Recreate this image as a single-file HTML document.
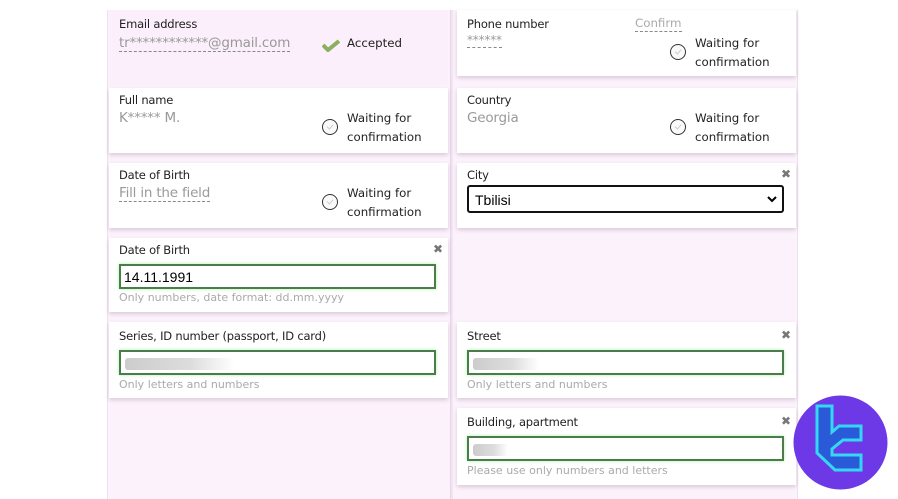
<!DOCTYPE html>
<html><head><meta charset="utf-8"><style>
*{margin:0;padding:0;box-sizing:border-box}
body{width:898px;height:499px;background:#fff;position:relative;overflow:hidden;font-family:"DejaVu Sans","Liberation Sans",sans-serif;color:#222}
.bg{position:absolute;left:107px;top:10px;width:691px;height:489px;background:#fcf2fc;border-left:1px solid #efe0ef;border-right:1px solid #efe0ef}
.div{position:absolute;left:450px;top:10px;width:3px;height:489px;background:#f2e4f2;border-left:1px solid #e6d6e6}
.card{position:absolute;background:#fff;box-shadow:0 2px 4px rgba(120,80,120,.25)}
.lbl{position:absolute;left:10px;font-size:11.5px;color:#222;letter-spacing:-.2px}
.val{position:absolute;left:10px;font-size:13.5px;color:#9a9a9a;letter-spacing:-.2px}
.dash{border-bottom:1px dashed #888}
.st{position:absolute;font-size:11.8px;line-height:19px;color:#222}
.circ{position:absolute;width:16px;height:16px;border:1.5px solid #333;border-radius:50%;background:#fafafa}
.circ:after{content:"";position:absolute;left:5px;top:3px;width:3px;height:5px;border-right:1px solid #ccc;border-bottom:1px solid #ccc;transform:rotate(40deg)}
.inp{position:absolute;left:10px;width:317px;height:25px;border:2px solid #4a7d4a;box-shadow:0 0 3px #aea;background:#fff;font-family:"Liberation Sans",sans-serif;font-size:14px;padding:3px 3px;color:#000}
.hint{position:absolute;left:10px;font-size:11px;color:#aaa}
.x{position:absolute;right:5px;font-size:12px;color:#777;font-weight:bold}
.blur{position:absolute;top:6px;left:4px;height:12px;border-radius:3px;background:linear-gradient(90deg,#ccc,#ddd 60%,#fff)}
</style></head><body>
<div class="bg"></div>
<div class="div"></div>

<div class="card" style="left:109px;top:10px;width:339px;height:75px;background:#fbeffb;box-shadow:none">
 <div class="lbl" style="top:7px">Email address</div>
 <div class="val dash" style="top:25px">tr************@gmail.com</div>
 <svg style="position:absolute;left:213px;top:29px" width="18" height="13" viewBox="0 0 18 13"><path d="M1 6 L6 11 L17 2" stroke="#8ab060" stroke-width="4" fill="none"/></svg>
 <div class="st" style="left:238px;top:24px">Accepted</div>
</div>
<div class="card" style="left:109px;top:88px;width:339px;height:65px">
 <div class="lbl" style="top:5px">Full name</div>
 <div class="val" style="top:22px">K***** M.</div>
 <div class="circ" style="left:213px;top:31px"></div>
 <div class="st" style="left:238px;top:21px">Waiting for<br>confirmation</div>
</div>
<div class="card" style="left:109px;top:163px;width:339px;height:65px">
 <div class="lbl" style="top:5px">Date of Birth</div>
 <div class="val dash" style="top:22px">Fill in the field</div>
 <div class="circ" style="left:213px;top:31px"></div>
 <div class="st" style="left:238px;top:21px">Waiting for<br>confirmation</div>
</div>
<div class="card" style="left:109px;top:238px;width:339px;height:74px">
 <div class="lbl" style="top:5px">Date of Birth</div>
 <div class="x" style="top:4px">✖</div>
 <div class="inp" style="top:26px">14.11.1991</div>
 <div class="hint" style="top:53px">Only numbers, date format: dd.mm.yyyy</div>
</div>
<div class="card" style="left:109px;top:322px;width:339px;height:76px">
 <div class="lbl" style="top:7px">Series, ID number (passport, ID card)</div>
 <div class="inp" style="top:28px"><div class="blur" style="width:110px"></div></div>
 <div class="hint" style="top:56px">Only letters and numbers</div>
</div>

<div class="card" style="left:457px;top:10px;width:339px;height:66px">
 <div class="lbl" style="top:7px">Phone number</div>
 <div class="val dash" style="top:23px;font-size:12px">******</div>
 <div class="st dash" style="left:178px;top:5px;color:#aaa;line-height:16px">Confirm</div>
 <div class="circ" style="left:213px;top:34px"></div>
 <div class="st" style="left:238px;top:24px">Waiting for<br>confirmation</div>
</div>
<div class="card" style="left:457px;top:88px;width:339px;height:65px">
 <div class="lbl" style="top:5px">Country</div>
 <div class="val" style="top:22px">Georgia</div>
 <div class="circ" style="left:213px;top:31px"></div>
 <div class="st" style="left:238px;top:21px">Waiting for<br>confirmation</div>
</div>
<div class="card" style="left:457px;top:163px;width:339px;height:65px">
 <div class="lbl" style="top:5px">City</div>
 <div class="x" style="top:4px">✖</div>
 <div class="inp" style="top:22px;border:2px solid #111;box-shadow:none;border-radius:3px;height:28px;padding:5px 6px;width:317px">Tbilisi
  <svg style="position:absolute;right:5px;top:8px" width="10" height="8" viewBox="0 0 10 8"><path d="M1 2 L5 6 L9 2" stroke="#000" stroke-width="2" fill="none"/></svg></div>
</div>
<div class="card" style="left:457px;top:322px;width:339px;height:76px">
 <div class="lbl" style="top:7px">Street</div>
 <div class="x" style="top:6px">✖</div>
 <div class="inp" style="top:28px"><div class="blur" style="width:66px"></div></div>
 <div class="hint" style="top:56px">Only letters and numbers</div>
</div>
<div class="card" style="left:457px;top:408px;width:339px;height:77px">
 <div class="lbl" style="top:7px">Building, apartment</div>
 <div class="x" style="top:6px">✖</div>
 <div class="inp" style="top:28px"><div class="blur" style="width:35px"></div></div>
 <div class="hint" style="top:56px">Please use only numbers and letters</div>
</div>

<svg style="position:absolute;left:793px;top:395px" width="95" height="95" viewBox="0 0 95 95">
 <circle cx="47.5" cy="47.5" r="47" fill="#6d38e6"/>
 <path d="M24 11 H39 V37 L46 31 H68 V45 H50 L39 54 V60 H68 V75 H42 L24 58 Z" fill="#2a5ad8" stroke="#33d8f5" stroke-width="3" stroke-linejoin="miter"/>
</svg>
</body></html>
